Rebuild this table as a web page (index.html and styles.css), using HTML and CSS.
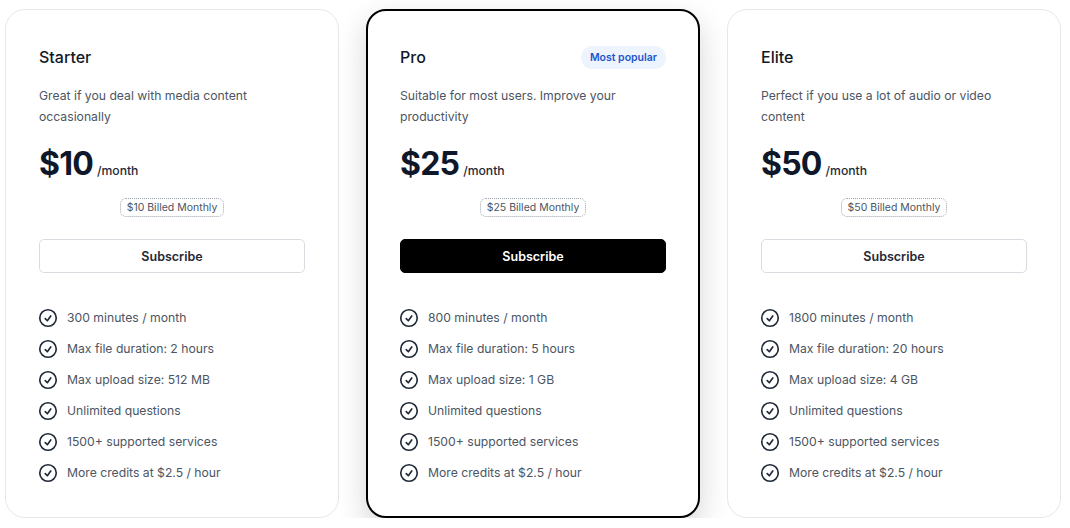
FILE: index.html
```html
<!DOCTYPE html>
<html lang="en">
<head>
<meta charset="utf-8">
<title>Pricing</title>
<link rel="stylesheet" href="styles.css">
</head>
<body>
<div class="plans">
  <div class="card">
    <div class="head"><h2 class="name">Starter</h2></div>
    <p class="desc">Great if you deal with media content occasionally</p>
    <div class="price"><span class="amount">$10</span><span class="per">/month</span></div>
    <div class="billed-row"><span class="billed">$10 Billed Monthly</span></div>
    <button class="btn">Subscribe</button>
    <ul class="features">
      <li><svg class="check" viewBox="0 0 24 24"><path d="M9 12.75 11.25 15 15 9.75M21 12a9 9 0 1 1-18 0 9 9 0 0 1 18 0Z"/></svg>300 minutes / month</li>
      <li><svg class="check" viewBox="0 0 24 24"><path d="M9 12.75 11.25 15 15 9.75M21 12a9 9 0 1 1-18 0 9 9 0 0 1 18 0Z"/></svg>Max file duration: 2 hours</li>
      <li><svg class="check" viewBox="0 0 24 24"><path d="M9 12.75 11.25 15 15 9.75M21 12a9 9 0 1 1-18 0 9 9 0 0 1 18 0Z"/></svg>Max upload size: 512 MB</li>
      <li><svg class="check" viewBox="0 0 24 24"><path d="M9 12.75 11.25 15 15 9.75M21 12a9 9 0 1 1-18 0 9 9 0 0 1 18 0Z"/></svg>Unlimited questions</li>
      <li><svg class="check" viewBox="0 0 24 24"><path d="M9 12.75 11.25 15 15 9.75M21 12a9 9 0 1 1-18 0 9 9 0 0 1 18 0Z"/></svg>1500+ supported services</li>
      <li><svg class="check" viewBox="0 0 24 24"><path d="M9 12.75 11.25 15 15 9.75M21 12a9 9 0 1 1-18 0 9 9 0 0 1 18 0Z"/></svg>More credits at $2.5 / hour</li>
    </ul>
  </div>
  <div class="card featured">
    <div class="head"><h2 class="name">Pro</h2><span class="badge">Most popular</span></div>
    <p class="desc">Suitable for most users. Improve your productivity</p>
    <div class="price"><span class="amount">$25</span><span class="per">/month</span></div>
    <div class="billed-row"><span class="billed">$25 Billed Monthly</span></div>
    <button class="btn btn-dark">Subscribe</button>
    <ul class="features">
      <li><svg class="check" viewBox="0 0 24 24"><path d="M9 12.75 11.25 15 15 9.75M21 12a9 9 0 1 1-18 0 9 9 0 0 1 18 0Z"/></svg>800 minutes / month</li>
      <li><svg class="check" viewBox="0 0 24 24"><path d="M9 12.75 11.25 15 15 9.75M21 12a9 9 0 1 1-18 0 9 9 0 0 1 18 0Z"/></svg>Max file duration: 5 hours</li>
      <li><svg class="check" viewBox="0 0 24 24"><path d="M9 12.75 11.25 15 15 9.75M21 12a9 9 0 1 1-18 0 9 9 0 0 1 18 0Z"/></svg>Max upload size: 1 GB</li>
      <li><svg class="check" viewBox="0 0 24 24"><path d="M9 12.75 11.25 15 15 9.75M21 12a9 9 0 1 1-18 0 9 9 0 0 1 18 0Z"/></svg>Unlimited questions</li>
      <li><svg class="check" viewBox="0 0 24 24"><path d="M9 12.75 11.25 15 15 9.75M21 12a9 9 0 1 1-18 0 9 9 0 0 1 18 0Z"/></svg>1500+ supported services</li>
      <li><svg class="check" viewBox="0 0 24 24"><path d="M9 12.75 11.25 15 15 9.75M21 12a9 9 0 1 1-18 0 9 9 0 0 1 18 0Z"/></svg>More credits at $2.5 / hour</li>
    </ul>
  </div>
  <div class="card">
    <div class="head"><h2 class="name">Elite</h2></div>
    <p class="desc">Perfect if you use a lot of audio or video content</p>
    <div class="price"><span class="amount">$50</span><span class="per">/month</span></div>
    <div class="billed-row"><span class="billed">$50 Billed Monthly</span></div>
    <button class="btn">Subscribe</button>
    <ul class="features">
      <li><svg class="check" viewBox="0 0 24 24"><path d="M9 12.75 11.25 15 15 9.75M21 12a9 9 0 1 1-18 0 9 9 0 0 1 18 0Z"/></svg>1800 minutes / month</li>
      <li><svg class="check" viewBox="0 0 24 24"><path d="M9 12.75 11.25 15 15 9.75M21 12a9 9 0 1 1-18 0 9 9 0 0 1 18 0Z"/></svg>Max file duration: 20 hours</li>
      <li><svg class="check" viewBox="0 0 24 24"><path d="M9 12.75 11.25 15 15 9.75M21 12a9 9 0 1 1-18 0 9 9 0 0 1 18 0Z"/></svg>Max upload size: 4 GB</li>
      <li><svg class="check" viewBox="0 0 24 24"><path d="M9 12.75 11.25 15 15 9.75M21 12a9 9 0 1 1-18 0 9 9 0 0 1 18 0Z"/></svg>Unlimited questions</li>
      <li><svg class="check" viewBox="0 0 24 24"><path d="M9 12.75 11.25 15 15 9.75M21 12a9 9 0 1 1-18 0 9 9 0 0 1 18 0Z"/></svg>1500+ supported services</li>
      <li><svg class="check" viewBox="0 0 24 24"><path d="M9 12.75 11.25 15 15 9.75M21 12a9 9 0 1 1-18 0 9 9 0 0 1 18 0Z"/></svg>More credits at $2.5 / hour</li>
    </ul>
  </div>
</div>
</body>
</html>
```

FILE: styles.css
```css
* { box-sizing: border-box; }
html, body { margin: 0; padding: 0; background: #ffffff; }
body {
  font-family: Inter, "Noto Sans", sans-serif;
  color: #111827;
}
.plans {
  display: flex;
  gap: 27px;
  padding: 9px 5px 0 5px;
}
.card {
  width: 334px;
  height: 509px;
  border: 1px solid #e5e7eb;
  border-radius: 20px;
  padding: 35px 33px 0 33px;
  background: #fff;
  display: flex;
  flex-direction: column;
}
.card.featured {
  border: 2px solid #000;
  padding: 34px 32px 0 32px;
  box-shadow: 0 12px 30px rgba(17, 24, 39, 0.18);
}
.head {
  height: 24px;
  display: flex;
  align-items: center;
  justify-content: space-between;
}
.name {
  margin: 0;
  font-size: 16px;
  font-weight: 500;
  line-height: 24px;
  color: #111827;
}
.badge {
  background: #eef4fe;
  color: #1d56c9;
  font-size: 10.5px;
  font-weight: 600;
  line-height: 23px;
  height: 23px;
  padding: 0 9px;
  border-radius: 12px;
}
.desc {
  margin: 16px 0 0 0;
  font-size: 12.2px;
  line-height: 21px;
  color: #4b5563;
  padding-right: 20px;
}
.price {
  margin-top: 17px;
  display: flex;
  align-items: baseline;
  height: 40px;
}
.amount {
  font-size: 32px;
  font-weight: 700;
  letter-spacing: -0.8px;
  color: #0f172a;
  line-height: 40px;
}
.per {
  font-size: 12.2px;
  font-weight: 500;
  color: #1f2937;
  margin-left: 4px;
}
.billed-row {
  margin-top: 14px;
  display: flex;
  justify-content: center;
}
.billed {
  font-size: 10.5px;
  line-height: 17px;
  color: #4b5563;
  border: 1.5px dotted #9ca3af;
  border-radius: 6px;
  padding: 0 6px;
}
.btn {
  margin-top: 22px;
  height: 34px;
  width: 100%;
  border: 1px solid #d9dce1;
  border-radius: 5px;
  background: #fff;
  font-family: inherit;
  font-size: 12.5px;
  font-weight: 600;
  color: #1f2937;
}
.btn-dark {
  background: #000;
  border-color: #000;
  color: #fff;
}
.features {
  list-style: none;
  margin: 29px 0 0 0;
  padding: 0;
}
.features li {
  display: flex;
  align-items: center;
  height: 31px;
  font-size: 12.2px;
  color: #4b5563;
}
.check {
  width: 22px;
  height: 22px;
  margin-left: -2.5px;
  margin-right: 8.5px;
  fill: none;
  stroke: #1f2937;
  stroke-width: 1.8;
  stroke-linecap: round;
  stroke-linejoin: round;
}
```
